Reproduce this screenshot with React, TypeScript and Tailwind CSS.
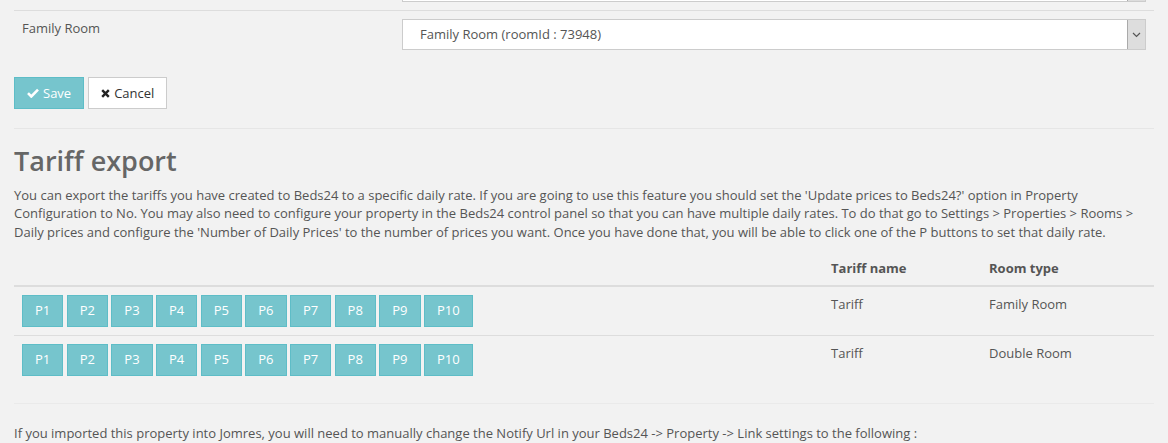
import React from 'react';

const rows = [
  { tariff: 'Tariff', room: 'Family Room' },
  { tariff: 'Tariff', room: 'Double Room' },
];

const prices = ['P1', 'P2', 'P3', 'P4', 'P5', 'P6', 'P7', 'P8', 'P9', 'P10'];

function Chevron() {
  return (
    <svg width="9" height="6" viewBox="0 0 9 6" fill="none">
      <path d="M1 1l3.5 3.5L8 1" stroke="#555" strokeWidth="1.2" />
    </svg>
  );
}

export default function App() {
  return (
    <div
      className="min-h-[443px] bg-[#f2f2f2] px-[14px] text-[13px] leading-[18.5px] text-[#555]"
      style={{ fontFamily: '"Open Sans", "Liberation Sans", sans-serif' }}
    >
      {/* bottom of previous select */}
      <div className="flex h-[2px]">
        <div className="w-[388px]" />
        <div className="flex w-[744px] border-x border-b border-[#ccc] bg-white">
          <div className="flex-1" />
          <div className="w-[18px] border-l border-[#aaa] bg-[#ddd]" />
        </div>
      </div>

      {/* room mapping row */}
      <div className="mt-[8px] flex border-t border-[#ddd] py-[8px]">
        <div className="w-[388px] pl-[8px]">Family Room</div>
        <div className="flex h-[31px] w-[744px] items-center border border-[#ccc] bg-white">
          <span className="flex-1 pl-[17px]">Family Room (roomId : 73948)</span>
          <div className="flex h-full w-[18px] items-center justify-center border-l border-[#aaa] bg-[#ddd]">
            <Chevron />
          </div>
        </div>
      </div>

      {/* save / cancel */}
      <div className="mt-[19px] flex gap-[4px]">
        <button className="flex h-[32px] items-center gap-[4px] border border-[#5ebdc7] bg-[#76c5cd] px-[12px] text-white">
          <svg width="12" height="10" viewBox="0 0 12 10">
            <path d="M1 5.2l3.3 3.3L11 1.6" stroke="#fff" strokeWidth="2.6" fill="none" />
          </svg>
          Save
        </button>
        <button className="flex h-[32px] items-center gap-[4px] border border-[#ccc] bg-white px-[12px] text-[#333]">
          <svg width="9" height="9" viewBox="0 0 9 9">
            <path d="M1.2 1.2l6.6 6.6M7.8 1.2L1.2 7.8" stroke="#222" strokeWidth="2.4" />
          </svg>
          Cancel
        </button>
      </div>

      <div className="mt-[19px] border-t border-[#e6e6e6]" />

      <h2 className="mt-[18px] text-[27px] font-semibold leading-[28.6px] text-[#666]">Tariff export</h2>
      <p className="mt-[10px]">
        You can export the tariffs you have created to Beds24 to a specific daily rate. If you are going to use this
        feature you should set the 'Update prices to Beds24?' option in Property Configuration to No. You may also need
        to configure your property in the Beds24 control panel so that you can have multiple daily rates. To do that go
        to Settings &gt; Properties &gt; Rooms &gt; Daily prices and configure the 'Number of Daily Prices' to the
        number of prices you want. Once you have done that, you will be able to click one of the P buttons to set that
        daily rate.
      </p>

      <table className="mt-[10px] w-full border-collapse">
        <thead>
          <tr className="border-b-2 border-[#ddd]">
            <th className="w-[809px] px-[8px] pt-[8px] pb-[7px]" />
            <th className="w-[158px] px-[8px] pt-[8px] pb-[7px] text-left font-bold">Tariff name</th>
            <th className="px-[8px] pt-[8px] pb-[7px] text-left font-bold">Room type</th>
          </tr>
        </thead>
        <tbody>
          {rows.map((r, i) => (
            <tr key={i} className={i > 0 ? 'border-t border-[#ddd]' : ''}>
              <td className="p-[8px] align-top">
                <div className="flex gap-[3.4px]">
                  {prices.map((p) => (
                    <button
                      key={p}
                      className="h-[32px] border border-[#5ebdc7] bg-[#76c5cd] px-[12px] text-white"
                    >
                      {p}
                    </button>
                  ))}
                </div>
              </td>
              <td className="p-[8px] align-top">{r.tariff}</td>
              <td className="p-[8px] align-top">{r.room}</td>
            </tr>
          ))}
        </tbody>
      </table>

      <div className="mt-[19px] border-t border-[#eaeaea]" />
      <p className="mt-[20px]">
        If you imported this property into Jomres, you will need to manually change the Notify Url in your Beds24 -&gt;
        Property -&gt; Link settings to the following :
      </p>
    </div>
  );
}
